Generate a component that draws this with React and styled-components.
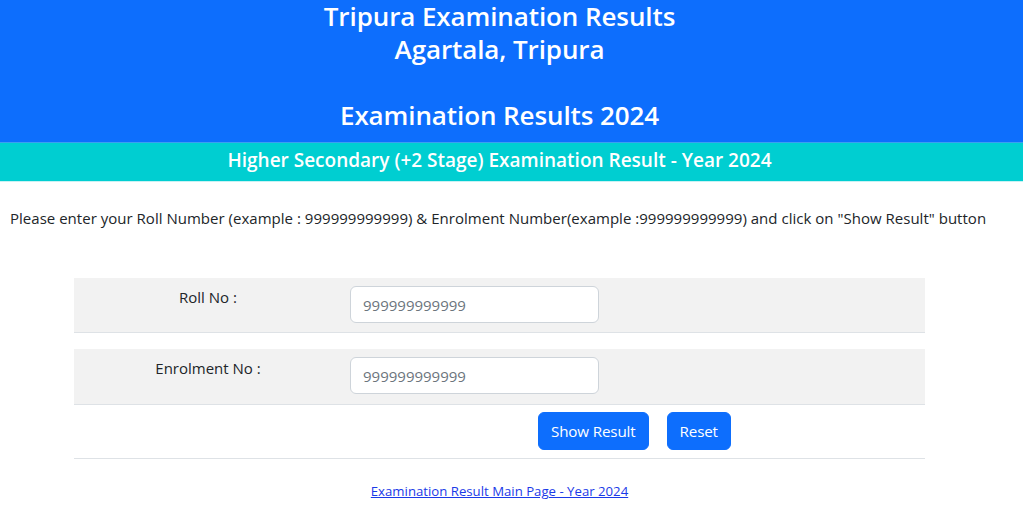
import React from "react";
import styled, { createGlobalStyle } from "styled-components";

const Global = createGlobalStyle`
  html, body { margin: 0; padding: 0; background: #fff; }
  body { font-family: "Open Sans", "Noto Sans", sans-serif; color: #212529; }
  * { box-sizing: border-box; }
`;

const Page = styled.div`
  width: 1023px;
`;

const Header = styled.header`
  background: #0d6efd;
  padding-right: 24px;
  padding-bottom: 10px;
`;

const HeaderLine = styled.div`
  color: #fff;
  text-align: center;
  font-size: 26px;
  font-weight: 600;
  line-height: 33px;
  height: 33px;
  letter-spacing: -0.1px;
`;

const SubBar = styled.div`
  background: #00ced1;
  border-top: 1px solid #3ba0f0;
  border-bottom: 1px solid #c8f2f3;
  height: 40px;
  padding: 0 24px 5px 0;
  display: flex;
  align-items: center;
  justify-content: center;
  color: #fff;
  font-size: 19px;
  font-weight: 600;
  letter-spacing: 0;
`;

const Body = styled.main`
  width: 999px;
`;

const Instruction = styled.p`
  margin: 26px 0 0 10px;
  font-size: 15px;
  line-height: 20px;
  letter-spacing: 0.02px;
  white-space: nowrap;
`;

const FormTable = styled.div`
  width: 851px;
  margin: 50px auto 0;
  display: flex;
  flex-direction: column;
`;

const Row = styled.div`
  display: grid;
  grid-template-columns: 268px 1fr;
  height: ${(p) => p.$h}px;
  background: ${(p) => (p.$shaded ? "#f2f2f2" : "#fff")};
  border-bottom: 1px solid #dee2e6;
  margin-bottom: ${(p) => p.$gap || 0}px;
`;

const LabelCell = styled.div`
  text-align: center;
  padding-top: 9px;
  font-size: 15px;
  line-height: 20px;
  color: #212529;
`;

const InputCell = styled.div`
  padding: 8px 0 0 8px;
`;

const TextInput = styled.input`
  width: 249px;
  height: 37px;
  border: 1px solid #ced4da;
  border-radius: 6px;
  padding: 0 12px;
  font-family: inherit;
  font-size: 15px;
  color: #212529;
  background: #fff;
  &::placeholder { color: #6c757d; opacity: 1; }
`;

const ButtonCell = styled.div`
  grid-column: 2;
  display: flex;
  gap: 18px;
  padding: 7px 0 0 196px;
`;

const Button = styled.button`
  height: 38px;
  padding: 0 12px;
  border: 1px solid #0d6efd;
  border-radius: 6px;
  background: #0d6efd;
  color: #fff;
  font-family: inherit;
  font-size: 15.2px;
  letter-spacing: -0.15px;
  cursor: pointer;
`;

const LinkWrap = styled.div`
  text-align: center;
  margin-top: 23px;
  font-size: 13.2px;
`;

const Link = styled.a`
  color: #1a3ae8;
  text-decoration: underline;
`;

export default function App() {
  return (
    <Page>
      <Global />
      <Header>
        <HeaderLine>Tripura Examination Results</HeaderLine>
        <HeaderLine>Agartala, Tripura</HeaderLine>
        <HeaderLine />
        <HeaderLine>Examination Results 2024</HeaderLine>
      </Header>
      <SubBar>Higher Secondary (+2 Stage) Examination Result - Year 2024</SubBar>
      <Body>
        <Instruction>
          Please enter your Roll Number (example : 999999999999) &amp; Enrolment Number(example :999999999999) and click on "Show Result" button
        </Instruction>
        <FormTable>
          <Row $shaded $h={55} $gap={16}>
            <LabelCell>Roll No :</LabelCell>
            <InputCell>
              <TextInput placeholder="999999999999" />
            </InputCell>
          </Row>
          <Row $shaded $h={56}>
            <LabelCell>Enrolment No :</LabelCell>
            <InputCell>
              <TextInput placeholder="999999999999" />
            </InputCell>
          </Row>
          <Row $h={54}>
            <ButtonCell>
              <Button>Show Result</Button>
              <Button>Reset</Button>
            </ButtonCell>
          </Row>
        </FormTable>
        <LinkWrap>
          <Link href="#">Examination Result Main Page - Year 2024</Link>
        </LinkWrap>
      </Body>
    </Page>
  );
}
